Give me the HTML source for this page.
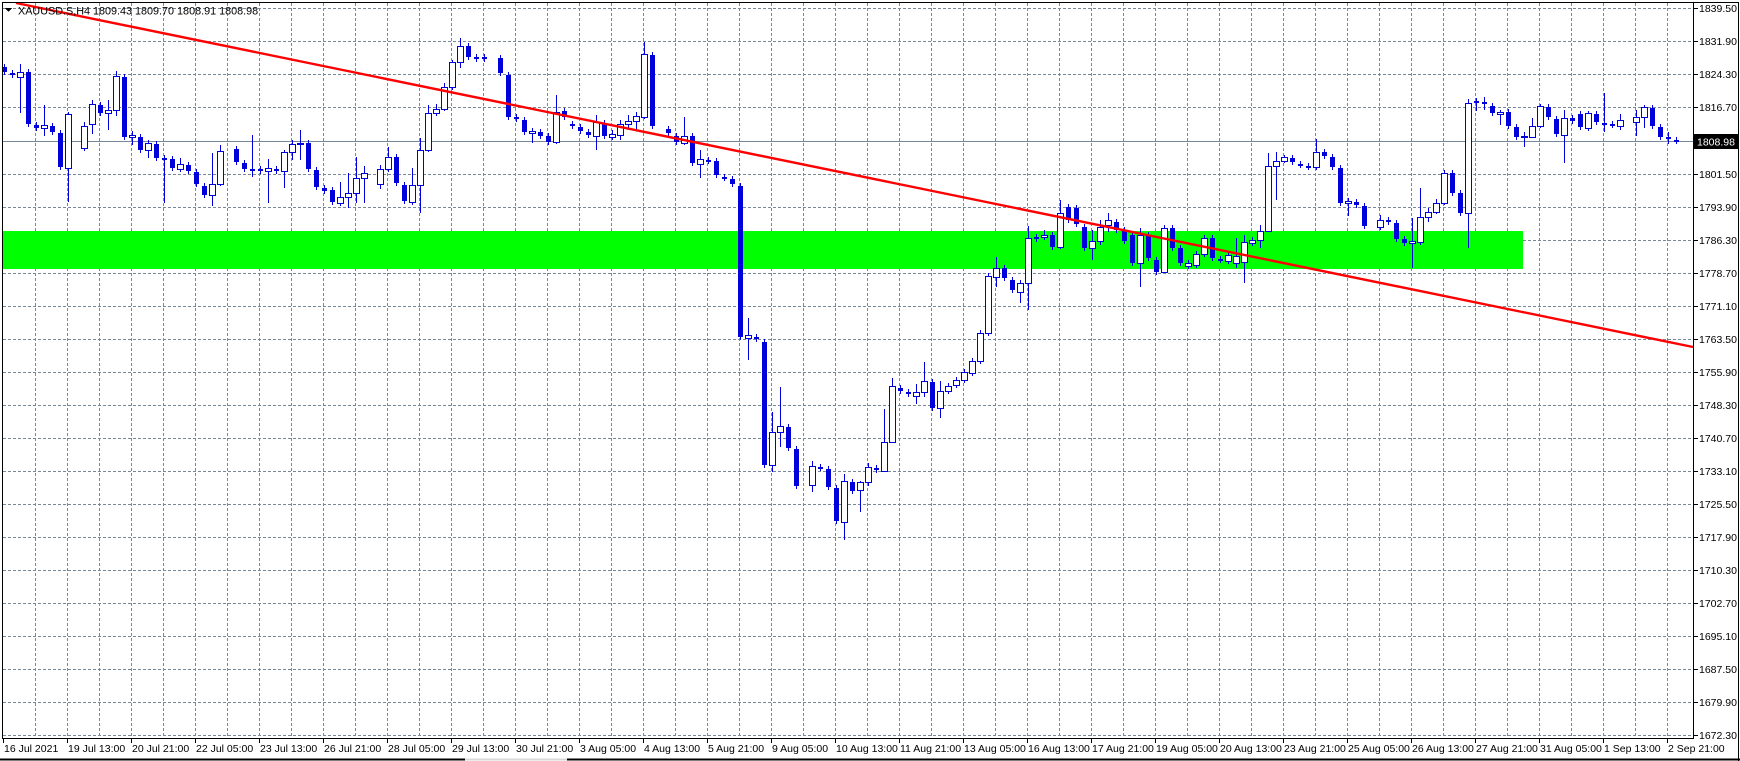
<!DOCTYPE html>
<html><head><meta charset="utf-8"><style>
html,body{margin:0;padding:0;background:#fff;width:1740px;height:761px;overflow:hidden}
svg{display:block}
text{font-family:"Liberation Sans",sans-serif;font-size:10.5px;fill:#000}
</style></head><body>
<svg id="c" width="1740" height="761" xmlns="http://www.w3.org/2000/svg" shape-rendering="crispEdges">
<rect width="1740" height="761" fill="#fff"/>
<g id="grid" stroke="#778899" stroke-width="1" stroke-dasharray="3,2"></g>
<rect x="2" y="231" width="1521" height="38" fill="#00ff00"/>
<line x1="3" y1="141.5" x2="1693" y2="141.5" stroke="#778899" stroke-width="1.3"/>
<g id="cand"></g>
<line x1="16" y1="3" x2="1693" y2="347" stroke="#ff0000" stroke-width="2.4" shape-rendering="auto"/>
<g stroke="#000" stroke-width="1">
<line x1="2" y1="2.5" x2="1738" y2="2.5"/>
<line x1="2.5" y1="2" x2="2.5" y2="738"/>
<line x1="1693.5" y1="2" x2="1693.5" y2="738"/>
<line x1="2" y1="738.5" x2="1694" y2="738.5"/>
<line x1="1738.5" y1="2" x2="1738.5" y2="761"/>
<line x1="0" y1="759.5" x2="1740" y2="759.5" stroke-width="2"/>
</g>
<line x1="465" y1="759.5" x2="567" y2="759.5" stroke="#d8d8d8" stroke-width="2"/>
<g id="axis"></g>
<rect x="1694" y="134" width="44" height="15" fill="#000"/>
<text x="1697" y="145.5" style="fill:#fff">1808.98</text>
<polygon points="5,8 12,8 8.5,12" fill="#000"/>
<text x="18" y="14.5" style="font-size:10.8px">XAUUSD.S,H4  1809.43 1809.70 1808.91 1808.98</text>
</svg>
<script>
var NS="http://www.w3.org/2000/svg";
function el(p,n,a,t){var e=document.createElementNS(NS,n);for(var k in a)e.setAttribute(k,a[k]);if(t!==undefined)e.textContent=t;p.appendChild(e);return e;}
var g=document.getElementById('grid');
for(var k=0;k<=22;k++){var y=Math.round(8.3+33.05*k)+0.5;el(g,'line',{x1:3,y1:y,x2:1693,y2:y});}
for(var k=1;k<=52;k++){var x=3+32*k+0.5;el(g,'line',{x1:x,y1:3,x2:x,y2:738});}
var ax=document.getElementById('axis');
for(var k=0;k<=22;k++){var y=Math.round(8.3+33.05*k);var v=(1839.5-7.6*k).toFixed(2);
 el(ax,'line',{x1:1693,y1:y+0.5,x2:1698,y2:y+0.5,stroke:'#000'});
 if(k!==4)el(ax,'text',{x:1699,y:y+4},v);}
var L=["16 Jul 2021","19 Jul 13:00","20 Jul 21:00","22 Jul 05:00","23 Jul 13:00","26 Jul 21:00","28 Jul 05:00","29 Jul 13:00","30 Jul 21:00","3 Aug 05:00","4 Aug 13:00","5 Aug 21:00","9 Aug 05:00","10 Aug 13:00","11 Aug 21:00","13 Aug 05:00","16 Aug 13:00","17 Aug 21:00","19 Aug 05:00","20 Aug 13:00","23 Aug 21:00","25 Aug 05:00","26 Aug 13:00","27 Aug 21:00","31 Aug 05:00","1 Sep 13:00","2 Sep 21:00"];
for(var k=0;k<L.length;k++){var x=3+64*k;el(ax,'line',{x1:x+0.5,y1:738,x2:x+0.5,y2:743,stroke:'#000'});el(ax,'text',{x:x+1,y:752},L[k]);}
var D="0 d 67 72|1 d 73 75|2 u 72 77 64 113|3 d 72 124|4 d 125 128|5 u 125 128 105 136|6 d 126 132|7 d 133 167|8 u 114 168 112 202|10 u 126 148 122 151|11 u 104 124 100 134|12 d 105 113|13 u 110 113 100 130|14 u 76 110 71 116|15 d 77 137|16 u 135 137 131 145|17 d 137 150|18 u 143 150 140 158|19 d 144 158|20 d 158 160 155 203|21 d 159 168|22 u 164 169 158 172|23 d 165 171|24 d 172 184|25 d 186 195|26 u 184 195 153 206|27 u 151 184 145 186|29 d 149 162|30 d 163 169|31 d 169 171 135 177|32 d 169 171|33 u 168 171 159 203|34 d 169 171|35 u 152 171 150 188|36 u 144 152 140 160|37 u 143 144 130 160|38 d 143 169|39 d 170 187|40 d 188 191|41 d 190 202|42 u 197 203 182 206|43 u 193 197 173 208|44 u 178 193 157 203|45 u 173 178 166 203|47 u 169 184 165 189|48 u 157 169 147 172|49 d 157 183|50 d 185 201|51 u 185 202 168 205|52 u 150 185 138 213|53 u 113 150 105 152|54 u 109 113 104 116|55 u 87 109 83 111|56 u 62 87 60 90|57 u 46 62 38 68|58 d 46 57|59 d 57 59|60 d 57 59|62 d 58 73|63 d 75 117|64 d 117 119|65 d 120 132|66 u 131 133 128 143|67 d 132 136|68 d 136 142|69 u 112 142 95 144|70 d 111 117|71 d 124 126|72 d 127 131|73 d 132 135|74 u 122 136 115 150|75 d 123 136|76 u 134 137 130 140|77 u 124 135 120 140|78 u 121 124 115 130|79 u 116 121 112 130|80 u 54 117 42 119|81 d 55 126|83 d 129 133|84 d 136 142|85 u 136 143 117 145|86 d 136 163|87 u 159 164 150 178|88 d 160 161|89 d 161 175|90 d 177 178|91 d 179 184|92 d 186 337|93 u 335 338 318 360|94 d 337 339|95 d 342 465|96 u 432 465 412 472|97 u 426 432 387 447|98 d 427 448|99 d 449 486|101 u 466 485 461 492|102 d 467 468|103 d 469 487|104 d 488 521|105 u 481 522 474 540|106 d 482 491|107 u 482 490 481 512|108 u 467 482 463 486|109 d 468 470|110 u 442 471 409 471|111 u 386 442 378 443|112 d 388 391|113 d 392 394|114 u 392 396 384 404|115 u 381 392 362 397|116 d 382 408|117 u 391 408 381 418|118 u 386 391|119 u 380 385|120 u 372 380|121 u 361 373|122 u 333 361|123 u 276 333|124 u 268 277 257 287|125 d 268 278|126 d 280 290|127 u 283 292 280 303|128 u 238 283 226 310|129 d 237 239|130 u 235 237 230 240|131 d 235 247|132 u 213 247 200 249|133 d 207 220|134 d 208 224|135 d 227 248|136 u 241 248 230 260|137 u 227 241 220 245|138 u 220 225 213 232|139 d 222 230|140 d 230 241|141 d 235 263|142 u 235 263 228 287|143 d 235 258|144 d 260 272|145 u 228 272 225 273|146 d 228 248|147 d 248 263|148 u 263 266|149 u 254 265|150 u 238 254|151 d 238 258|152 d 259 260|153 u 255 261|154 u 256 263 238 268|155 u 242 262 235 283|156 u 240 243|157 u 231 240 225 248|158 u 166 231 153 231|159 u 161 166 152 200|160 u 157 161 155 163|161 d 158 162|162 d 164 165|163 d 166 167|164 u 152 167 139 170|165 d 152 156|166 d 157 167|167 d 168 203|168 u 201 203 198 216|169 d 202 205|170 d 206 226|172 u 220 227 215 230|173 d 220 222|174 d 223 239|175 d 239 243|176 u 241 243 218 268|177 u 217 242 188 245|178 u 212 217 208 222|179 u 203 212 199 214|180 u 173 203 170 205|181 d 173 193|182 d 193 213|183 u 103 213 99 248|184 d 101 103 98 111|185 d 102 103 97 110|186 d 106 113|187 u 112 114 110 125|188 d 112 126|189 d 127 137|190 u 136 137 132 147|191 u 126 137 118 138|192 u 106 126 104 128|193 d 107 117|194 d 119 134|195 u 118 135 110 163|196 d 118 121|197 d 114 127|198 u 113 128 111 131|199 d 114 122|200 d 123 124 93 132|201 d 124 125|202 u 120 126 114 130|204 u 117 122 110 136|205 u 107 117 105 128|206 d 108 126|207 d 127 137|208 d 137 138 132 144|209 d 140 141";
var cg=document.getElementById('cand'),C="#0000dc";
D.split('|').forEach(function(s){var p=s.split(' ');var i=+p[0],t=p[1],a=+p[2],b=+p[3];
 var wt=p.length>4?+p[4]:a-3,wb=p.length>4?+p[5]:b+3;
 var cx=4+8*i;
 el(cg,'rect',{x:cx,y:wt,width:1,height:Math.max(1,wb-wt),fill:C});
 if(t=='u'){el(cg,'rect',{x:cx-2.5,y:a+0.5,width:6,height:Math.max(1,b-a),fill:'#fff',stroke:C,'stroke-width':1});}
 else{el(cg,'rect',{x:cx-2,y:a,width:5,height:Math.max(2,b-a),fill:C});}
});
</script>
</body></html>
